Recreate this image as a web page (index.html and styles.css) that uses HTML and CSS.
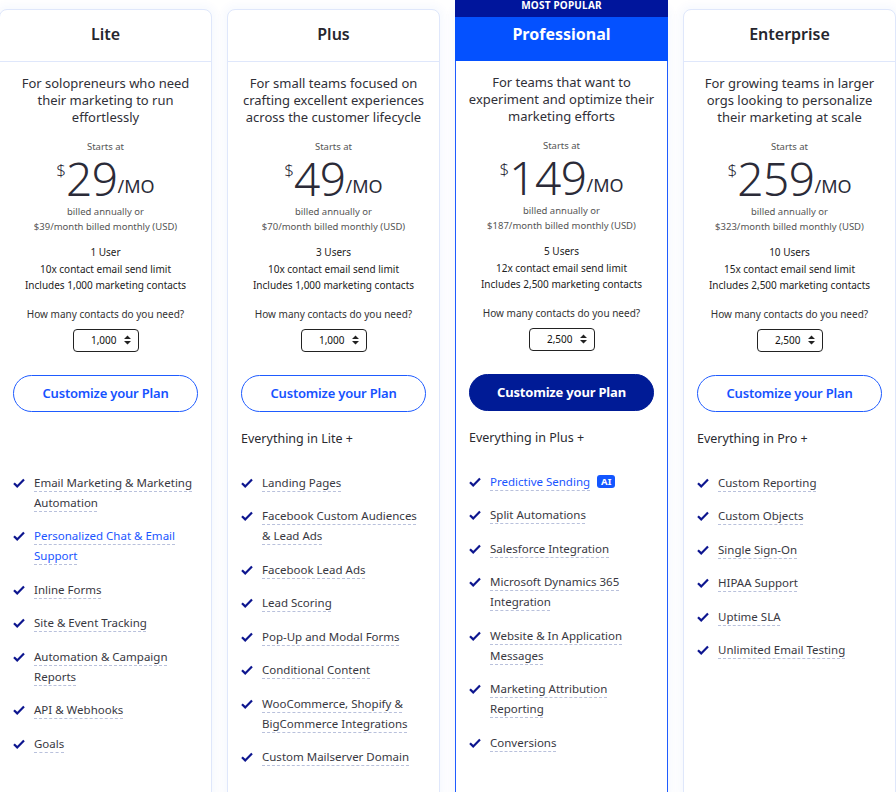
FILE: index.html
```html
<!DOCTYPE html>
<html lang="en">
<head>
<meta charset="utf-8">
<title>Pricing</title>
<link rel="stylesheet" href="styles.css">
</head>
<body>
<div class="plans">
  <!-- Lite -->
  <section class="card">
    <header class="card-head"><h2>Lite</h2></header>
    <div class="card-body">
      <p class="desc">For solopreneurs who need<br>their marketing to run<br>effortlessly</p>
      <div class="starts">Starts at</div>
      <div class="price"><span class="cur">$</span><span class="amt">29</span><span class="per">/MO</span></div>
      <div class="billed">billed annually or<br>$39/month billed monthly (USD)</div>
      <div class="limits">1 User<br>10x contact email send limit<br>Includes 1,000 marketing contacts</div>
      <div class="ask">How many contacts do you need?</div>
      <div class="select"><span>1,000</span><svg width="9" height="12" viewBox="0 0 9 12"><path d="M1 5 L4.5 1.5 L8 5 Z M1 7 L4.5 10.5 L8 7 Z" fill="#222"/></svg></div>
      <a class="btn">Customize your Plan</a>
      <div class="everything"></div>
      <ul class="features">
        <li><span>Email Marketing &amp; Marketing Automation</span></li>
        <li class="link"><span>Personalized Chat &amp; Email Support</span></li>
        <li><span>Inline Forms</span></li>
        <li><span>Site &amp; Event Tracking</span></li>
        <li><span>Automation &amp; Campaign Reports</span></li>
        <li><span>API &amp; Webhooks</span></li>
        <li><span>Goals</span></li>
      </ul>
    </div>
  </section>

  <!-- Plus -->
  <section class="card">
    <header class="card-head"><h2>Plus</h2></header>
    <div class="card-body">
      <p class="desc">For small teams focused on<br>crafting excellent experiences<br>across the customer lifecycle</p>
      <div class="starts">Starts at</div>
      <div class="price"><span class="cur">$</span><span class="amt">49</span><span class="per">/MO</span></div>
      <div class="billed">billed annually or<br>$70/month billed monthly (USD)</div>
      <div class="limits">3 Users<br>10x contact email send limit<br>Includes 1,000 marketing contacts</div>
      <div class="ask">How many contacts do you need?</div>
      <div class="select"><span>1,000</span><svg width="9" height="12" viewBox="0 0 9 12"><path d="M1 5 L4.5 1.5 L8 5 Z M1 7 L4.5 10.5 L8 7 Z" fill="#222"/></svg></div>
      <a class="btn">Customize your Plan</a>
      <div class="everything">Everything in Lite +</div>
      <ul class="features">
        <li><span>Landing Pages</span></li>
        <li><span>Facebook Custom Audiences &amp; Lead Ads</span></li>
        <li><span>Facebook Lead Ads</span></li>
        <li><span>Lead Scoring</span></li>
        <li><span>Pop-Up and Modal Forms</span></li>
        <li><span>Conditional Content</span></li>
        <li><span>WooCommerce, Shopify &amp; BigCommerce Integrations</span></li>
        <li><span>Custom Mailserver Domain</span></li>
      </ul>
    </div>
  </section>

  <!-- Professional -->
  <section class="card card-pro">
    <div class="popular">MOST POPULAR</div>
    <header class="card-head"><h2>Professional</h2></header>
    <div class="card-body">
      <p class="desc">For teams that want to<br>experiment and optimize their<br>marketing efforts</p>
      <div class="starts">Starts at</div>
      <div class="price"><span class="cur">$</span><span class="amt">149</span><span class="per">/MO</span></div>
      <div class="billed">billed annually or<br>$187/month billed monthly (USD)</div>
      <div class="limits">5 Users<br>12x contact email send limit<br>Includes 2,500 marketing contacts</div>
      <div class="ask">How many contacts do you need?</div>
      <div class="select"><span>2,500</span><svg width="9" height="12" viewBox="0 0 9 12"><path d="M1 5 L4.5 1.5 L8 5 Z M1 7 L4.5 10.5 L8 7 Z" fill="#222"/></svg></div>
      <a class="btn btn-solid">Customize your Plan</a>
      <div class="everything">Everything in Plus +</div>
      <ul class="features">
        <li class="link"><span>Predictive Sending</span> <b class="ai">AI</b></li>
        <li><span>Split Automations</span></li>
        <li><span>Salesforce Integration</span></li>
        <li><span>Microsoft Dynamics 365 Integration</span></li>
        <li><span>Website &amp; In Application Messages</span></li>
        <li><span>Marketing Attribution Reporting</span></li>
        <li><span>Conversions</span></li>
      </ul>
    </div>
  </section>

  <!-- Enterprise -->
  <section class="card">
    <header class="card-head"><h2>Enterprise</h2></header>
    <div class="card-body">
      <p class="desc">For growing teams in larger<br>orgs looking to personalize<br>their marketing at scale</p>
      <div class="starts">Starts at</div>
      <div class="price"><span class="cur">$</span><span class="amt">259</span><span class="per">/MO</span></div>
      <div class="billed">billed annually or<br>$323/month billed monthly (USD)</div>
      <div class="limits">10 Users<br>15x contact email send limit<br>Includes 2,500 marketing contacts</div>
      <div class="ask">How many contacts do you need?</div>
      <div class="select"><span>2,500</span><svg width="9" height="12" viewBox="0 0 9 12"><path d="M1 5 L4.5 1.5 L8 5 Z M1 7 L4.5 10.5 L8 7 Z" fill="#222"/></svg></div>
      <a class="btn">Customize your Plan</a>
      <div class="everything">Everything in Pro +</div>
      <ul class="features">
        <li><span>Custom Reporting</span></li>
        <li><span>Custom Objects</span></li>
        <li><span>Single Sign-On</span></li>
        <li><span>HIPAA Support</span></li>
        <li><span>Uptime SLA</span></li>
        <li><span>Unlimited Email Testing</span></li>
      </ul>
    </div>
  </section>
</div>
</body>
</html>
```

FILE: styles.css
```css
* { box-sizing: border-box; }
html, body { margin: 0; padding: 0; }
body {
  width: 896px;
  height: 792px;
  overflow: hidden;
  background: #ffffff;
  font-family: "Noto Sans", "Open Sans", Arial, sans-serif;
  color: #2a2a33;
}
.plans {
  display: grid;
  grid-template-columns: repeat(4, 213px);
  column-gap: 15px;
  margin-left: -1px;
  padding-top: 9px;
  height: 800px;
}
.card {
  position: relative;
  background: #fff;
  border: 1px solid #dfe7fb;
  border-radius: 8px;
  box-shadow: 0 0 8px 4px rgba(40, 80, 230, 0.035);
  display: flex;
  flex-direction: column;
}
.card-pro { border-color: #1f5cff; }
.card-head {
  height: 52px;
  padding-bottom: 4px;
  border-bottom: 1px solid #dfe7fb;
  display: flex;
  align-items: center;
  justify-content: center;
}
.card-head h2 {
  margin: 0;
  font-size: 16px;
  font-weight: 600;
  color: #26262e;
}
.card-pro .card-head {
  background: #0451ff;
  border-bottom: none;
  margin: 0 -1px;
  height: 51px;
}
.card-pro .card-head h2 { color: #fff; font-weight: 700; }
.popular {
  position: absolute;
  top: -10px;
  left: -1px;
  right: -1px;
  height: 17px;
  background: #00159c;
  color: #fff;
  font-size: 10px;
  font-weight: 700;
  letter-spacing: 0.2px;
  text-align: center;
  line-height: 10px;
  padding-top: 0;
  z-index: 2;
}
.card-body {
  padding: 13px 13px 0;
  text-align: center;
}
.desc {
  margin: 0 -6px;
  font-size: 13px;
  line-height: 17px;
  color: #303038;
  white-space: nowrap;
}
.starts {
  margin-top: 13px;
  font-size: 9.5px;
  line-height: 15px;
  color: #555;
}
.price {
  display: flex;
  justify-content: center;
  align-items: flex-start;
  height: 48px;
  color: #2b2b38;
}
.cur { font-size: 17px; font-weight: 300; margin-top: 6px; line-height: 20px; }
.amt { font-size: 46px; font-weight: 300; line-height: 48px; letter-spacing: -0.5px; }
.per { font-size: 18px; font-weight: 400; margin-top: 20px; line-height: 24px; }
.billed {
  margin-top: 2px;
  font-size: 9.5px;
  line-height: 15px;
  color: #555;
}
.limits {
  margin-top: 10px;
  font-size: 10px;
  line-height: 16.5px;
  color: #222;
}
.ask {
  margin-top: 12px;
  font-size: 10px;
  line-height: 16px;
  color: #333;
}
.select {
  margin: 7px auto 0;
  width: 66px;
  height: 23px;
  border: 1px solid #222;
  border-radius: 4px;
  display: flex;
  align-items: center;
  justify-content: flex-end;
  gap: 6px;
  padding-right: 6px;
  font-size: 10px;
  color: #111;
}
.btn {
  display: flex;
  align-items: center;
  justify-content: center;
  margin-top: 23px;
  height: 37px;
  border: 1px solid #1f5cff;
  border-radius: 20px;
  color: #1652ff;
  font-size: 13px;
  font-weight: 600;
  letter-spacing: -0.2px;
}
.btn-solid {
  background: #001b96;
  border-color: #001b96;
  color: #fff;
  font-weight: 700;
}
.everything {
  margin-top: 18px;
  height: 17px;
  text-align: left;
  font-size: 12.5px;
  line-height: 17px;
  color: #2a2a30;
}
.features {
  list-style: none;
  margin: 26px 0 0;
  padding: 0;
  text-align: left;
}
.features li {
  position: relative;
  padding-left: 21px;
  margin-bottom: 13.5px;
  font-size: 11.5px;
  line-height: 20px;
  color: #38383f;
}
.features li::before {
  content: "";
  position: absolute;
  left: 0;
  top: 5px;
  width: 12px;
  height: 10px;
  background: url("data:image/svg+xml;utf8,<svg xmlns='http://www.w3.org/2000/svg' width='12' height='10' viewBox='0 0 12 10'><path d='M1 5.2 L4.2 8.4 L11 1.5' fill='none' stroke='%230d168f' stroke-width='2.2'/></svg>") no-repeat;
}
.features li span {
  text-decoration-line: underline;
  text-decoration-style: dashed;
  text-decoration-color: #b9c1dc;
  text-decoration-thickness: 1px;
  text-underline-offset: 4px;
}
.features li.link { color: #1a55ff; }
.ai {
  display: inline-block;
  background: #1356ff;
  color: #fff;
  font-size: 9.5px;
  font-weight: 700;
  line-height: 13px;
  padding: 0 4px;
  border-radius: 3px;
  margin-left: 4px;
  vertical-align: 1px;
}
```
